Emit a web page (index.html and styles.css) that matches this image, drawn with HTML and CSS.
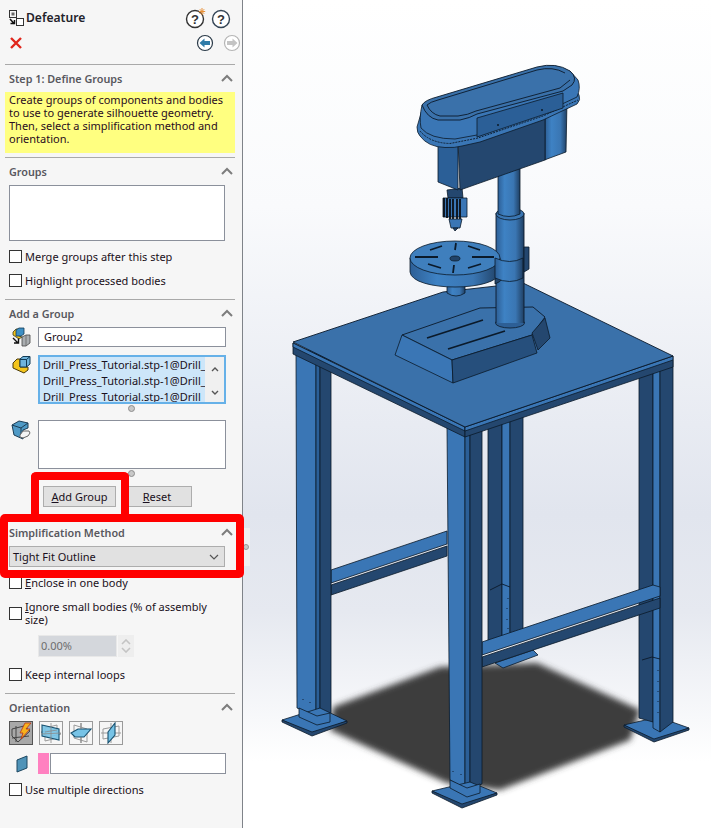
FILE: index.html
```html
<!DOCTYPE html>
<html lang="en">
<head>
  <meta charset="UTF-8">
  <title>Defeature</title>
  <link rel="stylesheet" href="styles.css">
</head>
<body>
  <div class="page">
    <aside class="panel">
      <div class="title-row">
        <svg class="title-icon" width="16" height="16" viewBox="0 0 16 16">
          <rect x="1.5" y="0.5" width="7" height="7" fill="none" stroke="#333"/>
          <rect x="3.5" y="2.5" width="3" height="3" fill="#666"/>
          <rect x="8.5" y="8.5" width="7" height="7" fill="#fff" stroke="#333"/>
          <path d="M2 9 L6.5 14 M2.5 13.5 H6.5 V10" fill="none" stroke="#111" stroke-width="1.5"/>
        </svg>
        <span class="title">Defeature</span>
        <svg class="help" width="22" height="22" viewBox="0 0 22 22">
          <circle cx="10" cy="12" r="8.5" fill="#fff" stroke="#333" stroke-width="1.4"/>
          <text x="10" y="16.5" text-anchor="middle" class="help-mark">?</text>
          <path d="M17 1 V8 M13.8 4.5 H20.2 M14.8 2.2 L19.2 6.8 M19.2 2.2 L14.8 6.8" stroke="#e8913a" stroke-width="1"/>
        </svg>
        <svg class="help" width="22" height="22" viewBox="0 0 22 22">
          <circle cx="11" cy="12" r="8.5" fill="#fff" stroke="#345" stroke-width="1.4"/>
          <text x="11" y="16.5" text-anchor="middle" class="help-mark">?</text>
        </svg>
      </div>

      <div class="action-row">
        <svg width="12" height="12" viewBox="0 0 12 12">
          <path d="M1 1 L11 11 M11 1 L1 11" stroke="#e0261c" stroke-width="2.4"/>
        </svg>
        <svg class="nav-back" width="18" height="18" viewBox="0 0 18 18">
          <circle cx="9" cy="9" r="7.5" fill="#fff" stroke="#2a3a48" stroke-width="1.2"/>
          <path d="M3.5 9 L8.5 4.5 V7 H14 V11 H8.5 V13.5 Z" fill="#2f7ba8"/>
        </svg>
        <svg class="nav-next" width="18" height="18" viewBox="0 0 18 18">
          <circle cx="9" cy="9" r="7.5" fill="#fff" stroke="#b5b5b5" stroke-width="1.2"/>
          <path d="M14.5 9 L9.5 4.5 V7 H4 V11 H9.5 V13.5 Z" fill="#c4c4c4"/>
        </svg>
      </div>

      <section class="section">
        <div class="sec-head">
          <span>Step 1: Define Groups</span>
          <svg class="chev" width="12" height="8" viewBox="0 0 12 8"><path d="M1 7 L6 2 L11 7" fill="none" stroke="#7d7d7d" stroke-width="2"/></svg>
        </div>
        <p class="hint">Create groups of components and bodies<br>to use to generate silhouette geometry.<br>Then, select a simplification method and<br>orientation.</p>
      </section>

      <section class="section groups">
        <div class="sec-head">
          <span>Groups</span>
          <svg class="chev" width="12" height="8" viewBox="0 0 12 8"><path d="M1 7 L6 2 L11 7" fill="none" stroke="#7d7d7d" stroke-width="2"/></svg>
        </div>
        <div class="box groups-box"></div>
        <label class="check merge"><i class="cb"></i><span>Merge groups after this step</span></label>
        <label class="check highlight"><i class="cb"></i><span>Highlight processed bodies</span></label>
      </section>

      <section class="section add-group">
        <div class="sec-head">
          <span>Add a Group</span>
          <svg class="chev" width="12" height="8" viewBox="0 0 12 8"><path d="M1 7 L6 2 L11 7" fill="none" stroke="#7d7d7d" stroke-width="2"/></svg>
        </div>
        <div class="field-row">
          <svg class="field-icon" width="20" height="20" viewBox="0 0 20 20">
            <path d="M2 5 L5 2 H8 V9 L11 10 L8 12 L2 8 Z" fill="#f2c21a" stroke="#3a3a1a" stroke-width=".8"/>
            <path d="M5 3 L8 1 H13 V7 L10 9 H5 Z" fill="#3d8fc4" stroke="#123a55" stroke-width=".8"/>
            <path d="M11 10 L15 8 H19 V16 L15 19 H11 Z" fill="#a9adb0" stroke="#444" stroke-width=".8"/>
            <path d="M15 8 V19" stroke="#666" stroke-width=".8"/>
            <path d="M2 11 L7 16 M3 16 H7.5 V11.5" fill="none" stroke="#111" stroke-width="1.4"/>
          </svg>
          <div class="box name-box">Group2</div>
        </div>
        <div class="field-row list-row">
          <svg class="field-icon" width="20" height="20" viewBox="0 0 20 20">
            <path d="M2 8 L6 4 H9 V12 L17 12 V15 L13 18 L2 13 Z" fill="#f4c51c" stroke="#4a3a0a"/>
            <path d="M9 4 L12 1.5 H19 V9 L15.500 12 H9 Z" fill="#6fb4dc" stroke="#123a55"/>
            <path d="M9 4.500 H15.500 V12 M15.500 4.500 L19 1.500" fill="none" stroke="#123a55"/>
          </svg>
          <div class="box list-box">
            <div class="list-lines">
              <div>Drill_Press_Tutorial.stp-1@Drill_</div>
              <div>Drill_Press_Tutorial.stp-1@Drill_</div>
              <div>Drill_Press_Tutorial.stp-1@Drill_</div>
            </div>
            <div class="scroll">
              <svg width="8" height="6" viewBox="0 0 8 6"><path d="M1 5 L4 2 L7 5" fill="none" stroke="#555" stroke-width="1.4"/></svg>
              <svg width="8" height="6" viewBox="0 0 8 6"><path d="M1 1 L4 4 L7 1" fill="none" stroke="#555" stroke-width="1.4"/></svg>
            </div>
          </div>
        </div>
        <div class="grip"></div>
        <div class="field-row faces-row">
          <svg class="field-icon" width="20" height="20" viewBox="0 0 20 20">
            <path d="M1 5 L8 1 L17 3 V8 L12 10 V19 L3 15 Z" fill="#4f9ac6" stroke="#1c3d55"/>
            <path d="M1 5 L10 8 L17 3 M10 8 V17" fill="none" stroke="#1c3d55"/>
            <path d="M9 15 L12 11 H18 L19 13 L17 16 L12 18 L9 17 Z" fill="#f4f4f4" stroke="#666"/>
          </svg>
          <div class="box faces-box"></div>
        </div>
        <div class="grip"></div>
        <div class="btn-row">
          <button class="btn add-btn"><u>A</u>dd Group</button>
          <button class="btn reset-btn"><u>R</u>eset</button>
        </div>
      </section>

      <section class="section simp">
        <div class="sec-head">
          <span>Simplification Method</span>
          <svg class="chev" width="12" height="8" viewBox="0 0 12 8"><path d="M1 7 L6 2 L11 7" fill="none" stroke="#7d7d7d" stroke-width="2"/></svg>
        </div>
        <div class="combo">
          <span>Tight Fit Outline</span>
          <svg width="10" height="6" viewBox="0 0 10 6"><path d="M1 1 L5 5 L9 1" fill="none" stroke="#555" stroke-width="1.2"/></svg>
        </div>
        <label class="check enclose"><i class="cb"></i><span><u>E</u>nclose in one body</span></label>
        <label class="check ignore"><i class="cb"></i><span><u>I</u>gnore small bodies (% of assembly size)</span></label>
        <div class="spin-row">
          <div class="spin-val">0.00%</div>
          <div class="spin-arrows">
            <svg width="10" height="6" viewBox="0 0 10 6"><path d="M1 5 L5 1 L9 5" fill="none" stroke="#c4c4c4" stroke-width="1.6"/></svg>
            <svg width="10" height="6" viewBox="0 0 10 6"><path d="M1 1 L5 5 L9 1" fill="none" stroke="#c4c4c4" stroke-width="1.6"/></svg>
          </div>
        </div>
        <label class="check keep"><i class="cb"></i><span>Keep internal loops</span></label>
      </section>

      <section class="section orient">
        <div class="sec-head">
          <span>Orientation</span>
          <svg class="chev" width="12" height="8" viewBox="0 0 12 8"><path d="M1 7 L6 2 L11 7" fill="none" stroke="#7d7d7d" stroke-width="2"/></svg>
        </div>
        <div class="tool-row">
          <div class="tool pressed">
            <svg width="22" height="22" viewBox="0 0 22 22">
              <path d="M2 7 L14 4 L20 9 L8 20 L2 14 Z M6 4 V20 M2 16 L19 14" fill="none" stroke="#444"/>
              <path d="M10 11 L15 1 H21 L16 7 H20 L11 17 L13 11 Z" fill="#f7b21c" stroke="#b8321a" stroke-width=".8"/>
            </svg>
          </div>
          <div class="tool">
            <svg width="22" height="22" viewBox="0 0 22 22">
              <path d="M5 6 L17 3 V16 L5 19 Z M1 10 L14 8 L21 12 L8 15 Z" fill="none" stroke="#9a9a9a"/>
              <path d="M2 3 L19 7 V18 L2 14 Z" fill="#77c3e6" fill-opacity=".9" stroke="#17506f" stroke-width="1.1"/>
              <path d="M11 1 V21 M5 10 L17 8 M1 12 L21 11" fill="none" stroke="#8a8a8a" stroke-width=".8"/>
            </svg>
          </div>
          <div class="tool">
            <svg width="22" height="22" viewBox="0 0 22 22">
              <path d="M4 3 L17 7 V20 L4 16 Z M11 1 V21" fill="none" stroke="#9a9a9a"/>
              <path d="M1 11 L8 7 H21 L14 15 H5 Z" fill="#77c3e6" stroke="#17506f" stroke-width="1.1"/>
              <path d="M11 1 V7 M11 15 V21" stroke="#8a8a8a"/>
            </svg>
          </div>
          <div class="tool">
            <svg width="22" height="22" viewBox="0 0 22 22">
              <path d="M3 7 L19 4 V14 L3 17 Z M1 11 H21 M11 1 V21" fill="none" stroke="#9a9a9a"/>
              <path d="M8 10 L15 1 V13 L8 21 Z" fill="#77c3e6" stroke="#17506f" stroke-width="1.1"/>
            </svg>
          </div>
        </div>
        <div class="dir-row">
          <svg class="dir-icon" width="14" height="18" viewBox="0 0 14 18">
            <path d="M2 5 L12 1 V13 L2 17 Z" fill="#4f93b8" stroke="#1c4660"/>
          </svg>
          <div class="pink"></div>
          <div class="box dir-box"></div>
        </div>
        <label class="check multi"><i class="cb"></i><span>Use multiple directions</span></label>
      </section>
    </aside>

    <div class="splitter"><span></span></div>

    <main class="view">
      <svg class="model" width="468" height="828" viewBox="243 0 468 828">
        <defs>
          <filter id="soft" x="-10%" y="-10%" width="120%" height="120%"><feGaussianBlur stdDeviation="3.2"/></filter>
          <linearGradient id="cyl" x1="0" x2="1" y1="0" y2="0">
            <stop offset="0" stop-color="#2d5f96"/>
            <stop offset=".3" stop-color="#3e82c4"/>
            <stop offset=".7" stop-color="#3a76b3"/>
            <stop offset="1" stop-color="#1f3f63"/>
          </linearGradient>
        </defs>

        <polygon points="333,707 440,667 537,663 640,710 630,740 500,790 447,783 330,730" fill="#3d3d3d" filter="url(#soft)"/>

        <!-- back foot and leg -->
        <polygon class="lt" points="495,663 533,650 538,655 503,668"/>
        <polygon class="dk" points="488,400 502,400 502,640 488,645"/>
        <polygon class="lt" points="502,400 510,400 510,634 502,638"/>
        <polygon class="dk" points="510,400 523,400 523,630 510,634"/>
        <path class="ln" d="M490 590 L502 584 L510 587 M508 598 v1 M507 608 v1 M507 619 v1 M508 628 v1"/>

        <!-- right foot and leg -->
        <polygon class="lt" points="624,725 658,717 689,728 654,741"/>
        <polygon class="dk" points="624,725 654,739 689,728 689,730 654,742 624,727"/>
        <polygon class="dk" points="639,360 653,360 653,722 639,718"/>
        <polygon class="lt" points="653,360 660,360 660,732 653,728"/>
        <polygon class="dk" points="660,360 673,360 673,722 660,732"/>
        <path class="ln" d="M642 660 L652 657 L660 659 M658 670 v1 M658 681 v1 M658 691 v1 M658 701 v1 M658 712 v1"/>

        <!-- right crossbar -->
        <polygon class="lt" points="482,642 653,585 660,587 660,596 482,655"/>
        <polygon class="dk" points="482,657 660,598 660,608 482,667"/>

        <!-- left crossbar -->
        <polygon class="lt" points="331,570 447,531 447,544 331,583"/>
        <polygon class="dk" points="331,585 447,546 447,556 331,595"/>

        <!-- left leg -->
        <polygon class="lt" points="296,350 316,350 316,716 297,708"/>
        <polygon class="md" points="316,350 320,350 320,718 316,716"/>
        <polygon class="dk" points="320,350 331,350 331,713 320,718"/>
        <polygon class="lt" points="282,720 320,708 347,721 312,734"/>
        <polygon class="dk" points="282,720 312,732 347,721 347,723 312,736 282,722"/>
        <polygon class="lt" points="299,708 317,716 330,713 330,722 317,725 299,717"/>
        <path class="ln" d="M303 699 v1 M310 702 v1"/>

        <!-- front leg -->
        <polygon class="lt" points="447,425 465,430 465,788 450,780"/>
        <polygon class="md" points="465,430 470,430 470,788 465,788"/>
        <polygon class="dk" points="470,430 482,430 482,784 470,788"/>
        <polygon class="lt" points="432,791 470,782 497,793 462,806"/>
        <polygon class="dk" points="432,791 462,804 497,793 497,795 462,808 432,793"/>
        <polygon class="lt" points="450,780 467,788 480,784 480,793 467,797 450,788"/>
        <path class="ln" d="M453 771 v1 M461 774 v1"/>

        <!-- table -->
        <polygon class="dk" points="293,343 465,427 465,437 293,354"/>
        <polygon class="lt" points="293,343 465,427 465,431 293,347"/>
        <polygon class="dk" points="465,427 673,356 673,367 465,437"/>
        <polygon class="lt" points="465,427 673,356 673,360 465,431"/>
        <polygon class="top" points="293,342 443,292 523,283 673,356 465,427"/>

        <!-- base -->
        <polygon class="top" points="402,335 480,308 533,307 545,317 532,335 452,360"/>
        <polygon class="dk" points="532,333 545,318 550,338 538,350"/>
        <polygon class="lt" points="395,355 402,335 452,360 453,383"/>
        <polygon class="md2" points="452,360 532,335 537,353 453,383"/>
        <path class="ln heavy" d="M427 338 L483 320 M448 349 L505 331"/>

        <!-- column -->
        <ellipse cx="510" cy="323" rx="14.500" ry="5" fill="#2d5f96" stroke="#0b1a2a" stroke-width=".8"/>
        <polygon points="496,213 524,213 524,323 496,323" fill="url(#cyl)"/>
        <path class="ln" d="M496 213 V323 M524 213 V323"/>
        <ellipse cx="510" cy="214" rx="14" ry="6" fill="#3a76b3" stroke="#0b1a2a" stroke-width=".8"/>
        <path d="M498 165 L520 160 V214 Q509 219 498 214 Z" fill="url(#cyl)" stroke="#0b1a2a" stroke-width=".8"/>
        <polygon class="dk" points="524,247 529,247 529,269 524,272"/>

        <!-- round table -->
        <path d="M447 284 H465 V293 Q456 299 447 293 Z" fill="url(#cyl)" stroke="#0b1a2a" stroke-width=".8"/>
        <path d="M495 255 L505 268 Q506 280 495 284 Z" fill="#23456b" stroke="#0b1a2a" stroke-width=".8"/>
        <path d="M410 258 V272 C412 292 498 292 500 272 V258 Z" fill="url(#cyl)" stroke="#0b1a2a" stroke-width=".8"/>
        <ellipse cx="455" cy="258" rx="45" ry="17" fill="#3f7fbd" stroke="#0b1a2a" stroke-width=".8"/>
        <ellipse cx="455" cy="258.500" rx="5" ry="2.500" fill="#214368" stroke="#0b1a2a" stroke-width=".8"/>
        <path class="ln heavy" d="M415 257 H438 M472 257 H494 M456 243 L455 250 M454 265 L453 273 M430 250 L442 246 M468 246 L480 250 M428 264 L441 268 M468 268 L481 264"/>
        <path d="M495 258 Q510 265 523 258 V278 Q510 285 495 278 Z" fill="url(#cyl)" stroke="#0b1a2a" stroke-width=".8"/>

        <!-- chuck -->
        <polygon class="dk" points="447,190 462,188 463,198 448,198"/>
        <polygon class="lt" points="443,198 467,198 467,217 443,217"/>
        <path class="knurl" d="M444 198 V217 M447 198 V218 M450 199 V219 M453 199 V219 M457 199 V219 M460 199 V219"/>
        <polygon class="lt" points="449,219 462,219 460,228 451,228"/>
        <polygon class="dk" points="453,228 458,228 455,231"/>

        <!-- head: motor housing, body, rim, lid -->
        <path d="M545 108 L567 100 L566 152 L547 159 L545 160 Z" fill="url(#cyl)" stroke="#0b1a2a" stroke-width=".8"/>
        <polygon class="md" points="438,140 458,140 458,190 438,182"/>
        <polygon class="dk" points="458,140 545,110 545,160 460,190"/>
        <path class="lt" d="M417 127 Q417 133 420 136 Q428 147 445 147.500 Q455 148 462 146 L480 142 L543 120 L577 104 Q581 100 579 95 L570 80 L422 110 Z"/>
        <path class="ln dash" d="M420 131 Q430 143 450 143.500 L478 138 L543 116 L578 100"/>
        <path class="lt" d="M422 105 Q419 118 421 128 Q430 139 455 139 L477 135 L543 113 L577 97 Q581 88 578 80 L570 71 Z"/>
        <polygon class="md" points="477,118 563,93 563,108 477,137"/>
        <path class="top" d="M422 105 Q425 100 437 97 L537 67 Q556 62 570 71 Q578 78 572 85 L563 91 L477 114 Q470 118 460 120 L438 120 Q427 118 422 105 Z"/>
        <path class="ln" d="M427 105 Q430 102 438 100 L537 70 Q553 66 565 73 M570 80 L560 88 L476 111 Q468 115 458 116 L440 116 Q431 114 427 105"/>
        <circle cx="498" cy="125" r="1" fill="#0b1a2a"/>
        <circle cx="542" cy="110" r="1" fill="#0b1a2a"/>
      </svg>
    </main>

    <!-- red annotation frames drawn on top of the screenshot -->
    <div class="mark mark-add"></div>
    <div class="mark mark-simp"></div>
  </div>
</body>
</html>
```

FILE: styles.css
```css
* {
  box-sizing: border-box;
}

html, body {
  margin: 0;
  padding: 0;
  height: 100%;
  overflow: hidden;
}

body {
  font-family: "Noto Sans", "Open Sans", sans-serif;
  font-size: 11px;
  color: #1a1020;
}

.page {
  position: relative;
  display: flex;
  width: 711px;
  height: 828px;
}

/* left property panel */
.panel {
  flex: none;
  width: 243px;
  height: 828px;
  padding-left: 5px;
  padding-right: 7px;
  background: #f6f6f6;
  border-right: 1px solid #7f8389;
}

.title-row {
  display: flex;
  align-items: center;
  height: 34px;
  padding-top: 1px;
  padding-left: 3px;
}

.title-icon {
  flex: none;
}

.title {
  margin-left: 2px;
  font-size: 12.1px;
  font-weight: 600;
  color: #23232b;
}

.help {
  flex: none;
}

.title + .help {
  margin-left: auto;
  margin-right: 3px;
}

.help + .help {
  margin-right: 3px;
}

.help-mark {
  font-family: "Liberation Sans", sans-serif;
  font-size: 13px;
  font-weight: 700;
  fill: #333;
}

.action-row {
  display: flex;
  align-items: center;
  height: 18px;
  padding-left: 5px;
  margin-right: -6px;
}

.nav-back {
  margin-left: auto;
  margin-right: 9px;
}

.section {
  border-top: 1px solid #a9a9a9;
}

.action-row + .section {
  margin-top: 12px;
}

.sec-head {
  display: flex;
  align-items: center;
  justify-content: space-between;
  height: 27px;
  padding: 0 2px 1px 4px;
  font-size: 10.8px;
  font-weight: 600;
  color: #58585e;
}

.chev {
  flex: none;
}

.hint {
  height: 61px;
  margin: 0 0 4px;
  padding: 1px 4px;
  line-height: 13px;
  background: #ffff80;
  color: #2a0c20;
}

.box {
  background: #fff;
  border: 1px solid #8b909b;
}

.groups-box {
  width: 216px;
  height: 56px;
  margin-left: 4px;
}

.check {
  display: flex;
  gap: 3px;
  margin-left: 4px;
  line-height: 13px;
}

.cb {
  flex: none;
  display: block;
  width: 13px;
  height: 13px;
  background: #fff;
  border: 1px solid #333;
}

.merge {
  margin-top: 9px;
}

.highlight {
  margin-top: 11px;
  margin-bottom: 12px;
}

.field-row {
  display: flex;
  margin-left: 6px;
}

.field-icon {
  flex: none;
  width: 20px;
  height: 20px;
  margin-right: 7px;
}

.name-box {
  width: 188px;
  height: 20px;
  padding-left: 5px;
  line-height: 18px;
}

.list-row {
  margin-top: 8px;
}

.list-box {
  display: flex;
  width: 188px;
  height: 49px;
  overflow: hidden;
  background: #cde6f9;
  border: 2px solid #66b1e8;
}

.list-lines {
  flex: 1;
  padding-left: 3px;
  line-height: 16px;
  white-space: nowrap;
  overflow: hidden;
}

.scroll {
  flex: none;
  display: flex;
  flex-direction: column;
  align-items: center;
  justify-content: space-between;
  width: 19px;
  padding: 9px 0 6px;
  background: #f0f0f0;
}

.grip {
  width: 7px;
  height: 7px;
  margin: 1px 0 0 123px;
  background: #c8c8c8;
  border: 1px solid #8d8d8d;
  border-radius: 50%;
}

.faces-row {
  margin-top: 8px;
}

.faces-box {
  width: 188px;
  height: 49px;
}

.btn-row {
  display: flex;
  gap: 6px;
  margin: 9px 0 11px 38px;
}

.btn {
  height: 21px;
  padding: 0;
  font: inherit;
  color: #1a1020;
  background: #e1e1e1;
  border: 1px solid #adadad;
}

.add-btn {
  width: 73px;
}

.reset-btn {
  width: 70px;
}

.combo {
  display: flex;
  align-items: center;
  justify-content: space-between;
  width: 216px;
  height: 21px;
  margin-left: 4px;
  padding: 0 5px 0 3px;
  background: #e1e1e1;
  border: 1px solid #adadad;
}

.enclose {
  margin-top: 9px;
}

.ignore {
  margin-top: 11px;
  width: 205px;
}

.ignore .cb {
  margin-top: 7px;
}

.spin-row {
  display: flex;
  gap: 1px;
  height: 22px;
  margin: 9px 0 0 33px;
}

.spin-val {
  width: 79px;
  padding-left: 2px;
  line-height: 20px;
  color: #6d6d6d;
  background: #d4d7dc;
  border: 1px solid #e8e8e8;
}

.spin-arrows {
  display: flex;
  flex-direction: column;
  align-items: center;
  justify-content: space-between;
  width: 16px;
  padding: 4px 0;
  background: #eeeeee;
}

.keep {
  margin-top: 11px;
  margin-bottom: 12px;
}

.tool-row {
  display: flex;
  gap: 6px;
  margin-left: 4px;
}

.tool {
  display: flex;
  align-items: center;
  justify-content: center;
  width: 24px;
  height: 24px;
  background: #f6f6f6;
  border: 1px solid #9a9a9a;
}

.pressed {
  background: #a8a8a8;
  border-color: #555;
}

.dir-row {
  display: flex;
  align-items: center;
  margin: 8px 0 0 10px;
}

.dir-icon {
  flex: none;
  margin-right: 9px;
}

.pink {
  flex: none;
  width: 11px;
  height: 21px;
  margin-right: 1px;
  background: #ff80c0;
}

.dir-box {
  width: 176px;
  height: 21px;
}

.multi {
  margin-top: 9px;
}

/* thin strip between panel and graphics area */
.splitter {
  position: absolute;
  left: 243px;
  top: 528px;
  width: 7px;
  height: 38px;
  background: #f0f0f0;
}

.splitter span {
  display: block;
  width: 6px;
  height: 6px;
  margin-top: 16px;
  background: #c8c8c8;
  border: 1px solid #999;
  border-radius: 50%;
}

/* graphics area */
.view {
  flex: 1;
  height: 828px;
  background: linear-gradient(to bottom, #ffffff 0%, #f9fafc 25%, #e1e5ee 62%, #e6e9f0 74%, #ffffff 92%);
}

.model {
  display: block;
}

.lt { fill: #3a76b5; stroke: #0b1a2a; stroke-width: .8; stroke-linejoin: round; }
.md { fill: #2b5f97; stroke: #0b1a2a; stroke-width: .8; }
.md2 { fill: #264f7c; stroke: #0b1a2a; stroke-width: .8; }
.dk { fill: #24476f; stroke: #0b1a2a; stroke-width: .8; }
.top { fill: #3a71aa; stroke: #0b1a2a; stroke-width: .9; stroke-linejoin: round; }
.ln { fill: none; stroke: #0b1a2a; stroke-width: .9; }
.heavy { stroke-width: 1.8; }
.dash { stroke-dasharray: 2 1; }
.knurl { fill: none; stroke: #0a1018; stroke-width: 1.8; }

/* red frames */
.mark {
  position: absolute;
  border: 8px solid #ff0000;
  border-radius: 5px;
}

.mark-add {
  left: 31px;
  top: 472px;
  width: 98px;
  height: 50px;
  border-bottom: none;
}

.mark-simp {
  left: 0;
  top: 514px;
  width: 244px;
  height: 64px;
}
```
